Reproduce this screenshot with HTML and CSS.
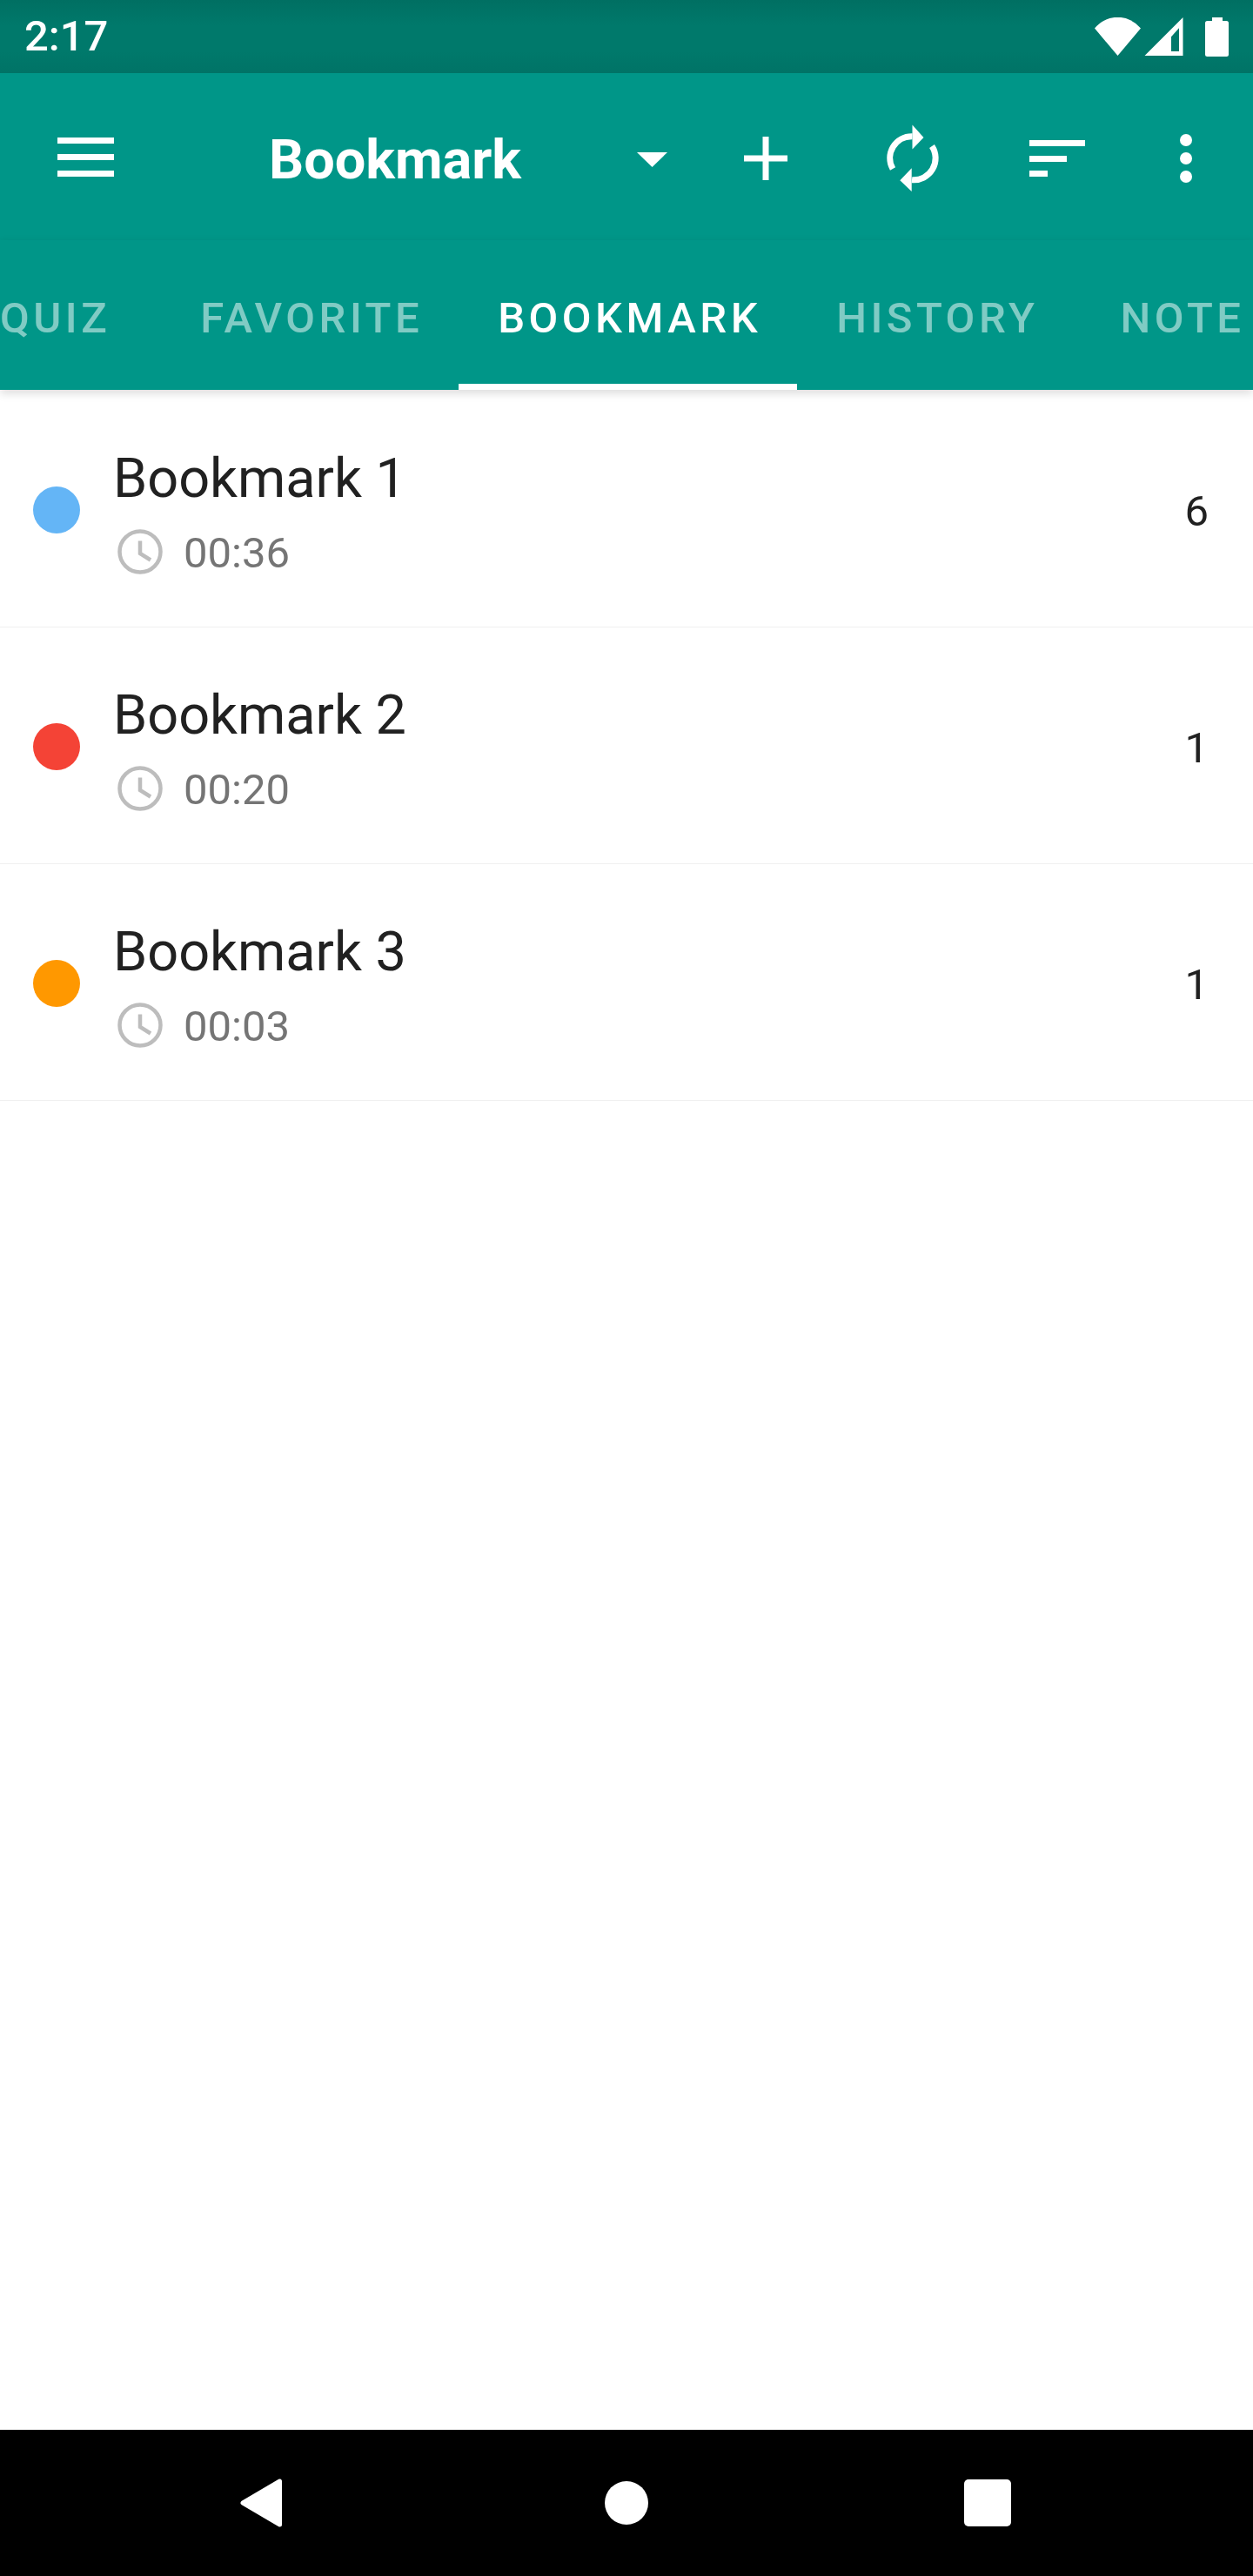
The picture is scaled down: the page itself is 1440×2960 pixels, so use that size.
FILE: index.html
```html
<!DOCTYPE html>
<html lang="en">
<head>
<meta charset="utf-8">
<title>Bookmark</title>
<link rel="stylesheet" href="styles.css">
</head>
<body>
<div class="app">
  <header class="status">
    <span class="clock-time">2:17</span>
    <div class="status-icons">
      <svg class="i-wifi" viewBox="0 0 53 44"><path d="M26.500 44 0 12.500A34 34 0 0 1 53 12.500Z"/></svg>
      <svg class="i-signal" viewBox="0 0 45 44"><path fill-rule="evenodd" d="M44.500 0V44H0.500ZM31 22.300V39H40V12.300Z"/></svg>
      <svg class="i-battery" viewBox="0 0 27 45"><path d="M8 0H20V4H24.500A2.500 2.500 0 0 1 27 6.500V42.500A2.500 2.500 0 0 1 24.500 45H2.500A2.500 2.500 0 0 1 0 42.500V6.500A2.500 2.500 0 0 1 2.500 4H8Z"/></svg>
    </div>
  </header>
  <nav class="toolbar">
    <svg class="i-menu" viewBox="0 0 65 45"><path d="M0 0H65V7H0ZM0 19H65V26H0ZM0 38H65V45H0Z"/></svg>
    <span class="title">Bookmark</span>
    <svg class="i-drop" viewBox="0 0 35 17"><path d="M0 0H35L17.500 17Z"/></svg>
    <svg class="i-plus" viewBox="0 0 50 50"><path d="M21.500 0H28.500V21.500H50V28.500H28.500V50H21.500V28.500H0V21.500H21.500Z"/></svg>
    <svg class="i-sync" viewBox="0 0 100 100"><path class="sync-arc" d="M26 64A25 25 0 0 1 48.500 26.700M71 38A25 25 0 0 1 48 76.700"/><path d="M48.500 13.500 61.500 28 48.500 41.500ZM47.700 63.300 34.300 77.300 47.700 90Z"/></svg>
    <svg class="i-sort" viewBox="0 0 64 42"><path d="M0 0H64V7H0ZM0 18H43V25H0ZM0 35H21V42H0Z"/></svg>
    <svg class="i-more" viewBox="0 0 14 56"><circle cx="7" cy="7" r="7"/><circle cx="7" cy="28" r="7"/><circle cx="7" cy="49" r="7"/></svg>
  </nav>
  <div class="tabs">
    <span class="tab tab-quiz">QUIZ</span>
    <span class="tab">FAVORITE</span>
    <span class="tab active">BOOKMARK</span>
    <span class="tab">HISTORY</span>
    <span class="tab tab-note">NOTE</span>
  </div>
  <main class="list">
    <div class="row">
      <span class="dot dot-blue"></span>
      <div class="info">
        <div class="name">Bookmark 1</div>
        <div class="meta">
          <svg class="i-clock" viewBox="0 0 52 52"><circle cx="26" cy="26" r="23.500"/><path d="M26 13.500V28L38 35.500"/></svg>
          <span>00:36</span>
        </div>
      </div>
      <span class="count">6</span>
    </div>
    <div class="row">
      <span class="dot dot-red"></span>
      <div class="info">
        <div class="name">Bookmark 2</div>
        <div class="meta">
          <svg class="i-clock" viewBox="0 0 52 52"><circle cx="26" cy="26" r="23.500"/><path d="M26 13.500V28L38 35.500"/></svg>
          <span>00:20</span>
        </div>
      </div>
      <span class="count">1</span>
    </div>
    <div class="row">
      <span class="dot dot-orange"></span>
      <div class="info">
        <div class="name">Bookmark 3</div>
        <div class="meta">
          <svg class="i-clock" viewBox="0 0 52 52"><circle cx="26" cy="26" r="23.500"/><path d="M26 13.500V28L38 35.500"/></svg>
          <span>00:03</span>
        </div>
      </div>
      <span class="count">1</span>
    </div>
  </main>
  <footer class="navbar">
    <svg class="i-back" viewBox="0 0 48 56"><path d="M3 28 45.500 3V53Z"/></svg>
    <span class="i-home"></span>
    <span class="i-recent"></span>
  </footer>
</div>
</body>
</html>
```
FILE: styles.css
```css
* { box-sizing: border-box; }
html, body { margin: 0; padding: 0; background: #fff; }
body { font-family: Roboto, "Liberation Sans", sans-serif; }
svg { display: block; fill: #fff; flex: none; }

.app { width: 1440px; height: 2960px; display: flex; flex-direction: column; overflow: hidden; }

.status {
  height: 84px; flex: none; display: flex; align-items: center; justify-content: space-between;
  padding: 0 28px; color: #fff;
  background: linear-gradient(#006f62, #00796b 35%, #00796b 70%, #007366);
}
.clock-time { font-size: 49px; font-weight: 500; line-height: 84px; }
.status-icons { display: flex; align-items: center; }
.i-wifi { width: 53px; height: 44px; }
.i-signal { width: 45px; height: 44px; margin-left: 4px; }
.i-battery { width: 27px; height: 45px; margin-left: 25px; }

.toolbar { height: 192px; flex: none; background: #009688; display: flex; align-items: flex-start; padding-left: 66px; }
.title { flex: none; font-size: 63px; font-weight: 700; color: #fff; line-height: 70px; margin: 65px 0 0 178px; width: 423px; }
.i-menu { width: 65px; height: 45px; margin-top: 74px; }
.i-drop { width: 35px; height: 17px; margin-top: 91px; }
.i-plus { width: 50px; height: 50px; margin: 73px 0 0 88px; }
.i-sync { width: 100px; height: 100px; margin: 46px 0 0 95px; }
.sync-arc { fill: none; stroke: #fff; stroke-width: 7px; }
.i-sort { width: 64px; height: 42px; margin: 77px 0 0 83px; }
.i-more { width: 14px; height: 56px; margin: 70px 0 0 109px; }

.tabs {
  height: 172px; flex: none; background: #009688; display: flex; align-items: stretch;
  box-shadow: 0 4px 10px rgba(0,0,0,.14); position: relative;
}
.tab {
  font-size: 49px; font-weight: 500; letter-spacing: 4.500px; color: rgba(255,255,255,.5);
  padding: 61px 41px 0 45px; white-space: nowrap; line-height: 58px;
}
.tab-quiz { padding-left: 0; margin-right: 17px; }
.tab-note { margin-left: 8px; }
.tab.active { color: #fff; border-bottom: 7px solid #fff; }

.list { flex: 1; display: flex; flex-direction: column; padding-top: 1px; }
.row { height: 272px; flex: none; display: flex; align-items: center; border-bottom: 1px solid #f0f0f0; padding: 0 51px 0 38px; }
.dot { width: 54px; height: 54px; border-radius: 50%; flex: none; margin-top: 3px; }
.dot-blue { background: #64b5f6; }
.dot-red { background: #f44336; }
.dot-orange { background: #ff9800; }
.info { flex: 1; margin-left: 38px; padding-top: 9px; }
.name { font-size: 63px; line-height: 74px; color: #212121; }
.meta { display: flex; align-items: center; margin-top: 20px; font-size: 49px; line-height: 58px; color: #757575; }
.i-clock { width: 52px; height: 52px; margin: -5px 24px 0 5px; fill: none; stroke: #bdbdbd; stroke-width: 4.500px; }
.count { font-size: 49px; color: #212121; padding-top: 5px; }

.navbar { height: 168px; flex: none; background: #000; display: flex; align-items: center; padding-left: 276px; }
.i-back { width: 48px; height: 56px; stroke: #fff; stroke-width: 5px; stroke-linejoin: round; }
.i-home { width: 50px; height: 50px; border-radius: 50%; background: #fff; margin-left: 371px; }
.i-recent { width: 54px; height: 54px; border-radius: 5px; background: #fff; margin-left: 363px; }
```
